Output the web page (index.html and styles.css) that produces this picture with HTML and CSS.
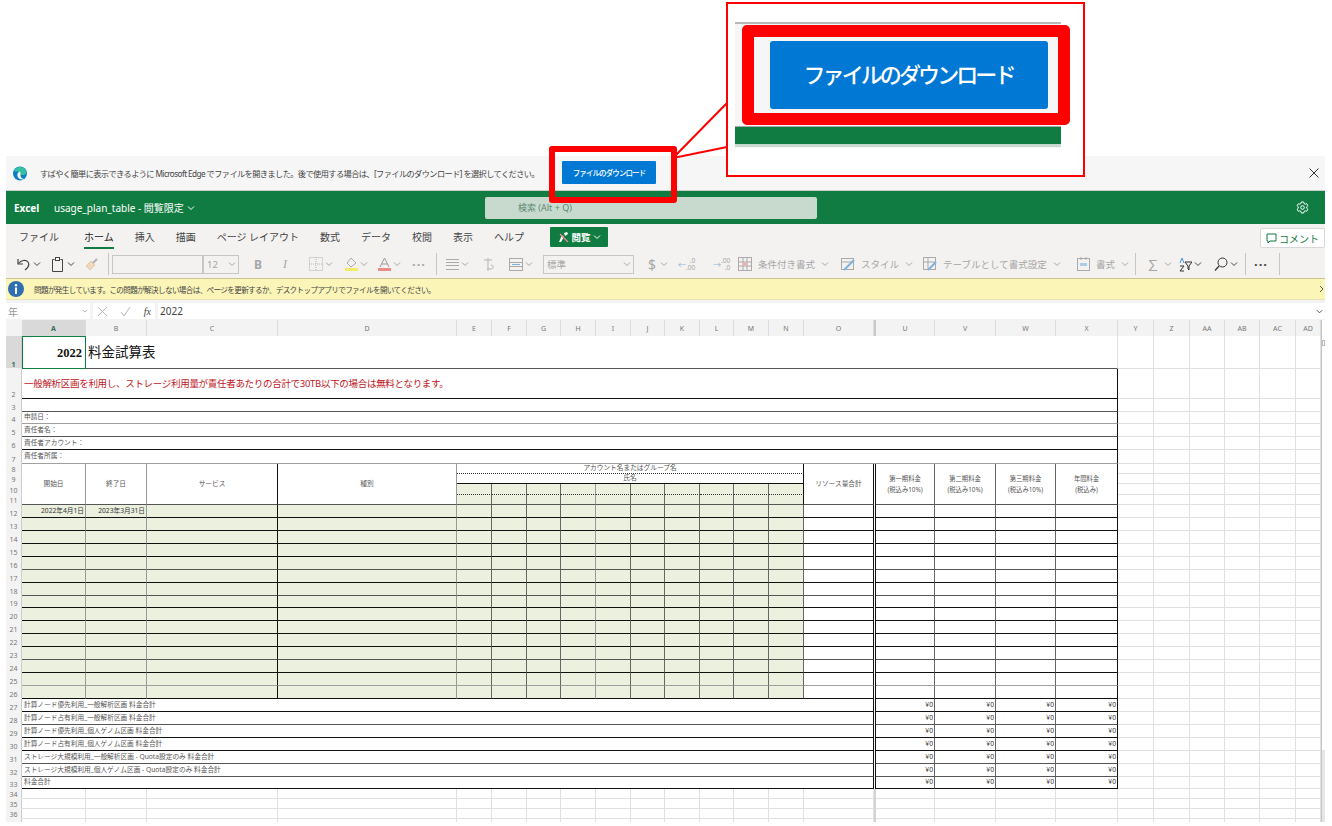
FILE: index.html
```html
<!DOCTYPE html>
<html lang="ja">
<head>
    <meta charset="UTF-8">
    <title>usage_plan_table</title>
    <link rel="stylesheet" href="styles.css">
</head>
<body>
    <svg class="defs" width="0" height="0">
        <symbol id="chev" viewBox="0 0 8 8"><path d="M1 2.500 4 5.500 7 2.500" fill="none" stroke="currentColor" stroke-width="1"/></symbol>
    </svg>

    <div class="page">
        <!-- Edge infobar -->
        <div class="edge-bar">
            <svg class="edge-logo" width="14" height="15" viewBox="0 0 14 15">
                <circle cx="7" cy="7.500" r="7" fill="#0c7fc4"/>
                <path d="M1 5C3 0 11-1 13.600 5.500 14 8 11 9.500 8 9 5 8.500 5 6.500 6.500 6 4 5 2 6 1 5Z" fill="#35c1a0"/>
                <path d="M7 5.500C5 6 3.800 8 4.600 10.500 5.500 13 9 14.500 12 13 9 13 7.500 11.500 7.500 9.500 7.500 8 7.500 6.500 7 5.500Z" fill="#f4f8fb"/>
            </svg>
            <span class="edge-msg">すばやく簡単に表示できるように Microsoft Edge でファイルを開きました。後で使用する場合は、[ファイルのダウンロード] を選択してください。</span>
            <button class="edge-btn">ファイルのダウンロード</button>
            <svg class="edge-close" width="10" height="10" viewBox="0 0 10 10"><path d="M.5.500 9.500 9.500M9.500.500.500 9.500" stroke="#333" stroke-width="1"/></svg>
        </div>

        <!-- Excel title bar -->
        <div class="top-bar">
            <div class="doc-title"><b>Excel</b><span>usage_plan_table - 閲覧限定</span><svg width="8" height="8"><use href="#chev"/></svg></div>
            <div class="search-box">検索 (Alt + Q)</div>
            <svg class="gear" width="13" height="13" viewBox="0 0 13 13" fill="none" stroke="#fff" stroke-width="1">
                <circle cx="6.500" cy="6.500" r="1.800"/>
                <path d="M5.300 1h2.400l.3 1.500 1.300.7 1.400-.5 1.200 2-1.100 1v1.600l1.100 1-1.200 2-1.400-.5-1.300.7L7.700 12H5.300L5 10.500l-1.300-.7-1.400.5-1.200-2 1.100-1V5.700l-1.100-1 1.200-2 1.400.5L5 2.500Z"/>
            </svg>
        </div>

        <!-- Ribbon tabs -->
        <div class="tabs">
            <span class="tab first">ファイル</span>
            <span class="tab active">ホーム</span>
            <span class="tab">挿入</span>
            <span class="tab">描画</span>
            <span class="tab">ページ レイアウト</span>
            <span class="tab">数式</span>
            <span class="tab">データ</span>
            <span class="tab">校閲</span>
            <span class="tab">表示</span>
            <span class="tab">ヘルプ</span>
            <button class="view-btn">
                <svg width="12" height="12" viewBox="0 0 12 12"><path d="M1 11 4 4l2 2-3 5Z" fill="#fff"/><path d="M6 2 9 1l1 2-3 2Z" fill="#fff"/><path d="M2 3 10 11" stroke="#f08a8a" stroke-width="1.200"/></svg>
                <b>閲覧</b>
                <svg width="8" height="8"><use href="#chev"/></svg>
            </button>
            <button class="comment-btn">
                <svg width="11" height="11" viewBox="0 0 11 11"><path d="M1 1h9v7H4L2 10V8H1Z" fill="none" stroke="#107c41"/></svg>
                コメント
            </button>
        </div>

        <!-- Ribbon toolbar -->
        <div class="toolbar">
            <div class="tool on">
                <svg width="14" height="14" viewBox="0 0 14 14" fill="none" stroke="#444" stroke-width="1.200"><path d="M1 2v5h5"/><path d="M1.500 6.500C4 3 9 2.500 11 5c1.500 2.500.5 5.500-3 8"/></svg>
                <svg class="chev" width="8" height="8"><use href="#chev"/></svg>
            </div>
            <div class="tool on">
                <svg width="13" height="15" viewBox="0 0 13 15" fill="none" stroke="#444"><path d="M2.500 2.500h-2v12h10v-12h-2"/><rect x="3.500" y=".5" width="4" height="3" fill="#fff"/></svg>
                <svg class="chev" width="8" height="8"><use href="#chev"/></svg>
            </div>
            <div class="tool">
                <svg width="13" height="13" viewBox="0 0 13 13"><path d="M1 8 6 3l4 4-5 5Z" fill="#f3d9b8" stroke="#c9b9a4" stroke-width=".6"/><path d="M8 5l4-4" stroke="#b0b0b0" stroke-width="2"/></svg>
            </div>
            <i class="sep"></i>
            <div class="combo"></div>
            <div class="combo size"><span>12</span><svg width="8" height="8"><use href="#chev"/></svg></div>
            <div class="tool letter"><b>B</b></div>
            <div class="tool letter"><em>I</em></div>
            <div class="tool">
                <svg width="14" height="14" viewBox="0 0 14 14" fill="none" stroke="#b5b5b5" stroke-dasharray="1 1"><rect x=".5" y=".5" width="13" height="13"/><path d="M7 0v14M0 7h14"/></svg>
                <svg class="chev" width="8" height="8"><use href="#chev"/></svg>
            </div>
            <div class="tool">
                <svg width="13" height="15" viewBox="0 0 13 15"><path d="M6 1 11 6 6 10 2 6Z" fill="none" stroke="#aaa"/><rect y="11" width="13" height="3" fill="#f2ec6a"/></svg>
                <svg class="chev" width="8" height="8"><use href="#chev"/></svg>
            </div>
            <div class="tool">
                <svg width="13" height="15" viewBox="0 0 13 15"><path d="M2 10 6.500 1 11 10M4 7h5" fill="none" stroke="#999"/><rect y="11" width="13" height="3" fill="#f08a8a"/></svg>
                <svg class="chev" width="8" height="8"><use href="#chev"/></svg>
            </div>
            <div class="tool dots">···</div>
            <i class="sep"></i>
            <div class="tool">
                <svg width="13" height="13" viewBox="0 0 13 13" stroke="#aaa"><path d="M0 1.500h13M0 4.500h13M0 7.500h13M0 11.500h13"/></svg>
                <svg class="chev" width="8" height="8"><use href="#chev"/></svg>
            </div>
            <div class="tool">
                <svg width="13" height="15" viewBox="0 0 13 15" fill="none" stroke="#b5b5b5"><path d="M6 1v13M2 3h8M9 8c3 0 3 4 0 4H5"/></svg>
            </div>
            <div class="tool">
                <svg width="14" height="13" viewBox="0 0 14 13" fill="none"><rect x=".5" y=".5" width="13" height="12" stroke="#aaa"/><path d="M0 4.500h14M0 8.500h14" stroke="#aaa"/><path d="M3 6.500h8" stroke="#7fb2dd"/></svg>
                <svg class="chev" width="8" height="8"><use href="#chev"/></svg>
            </div>
            <div class="combo std"><span>標準</span><svg width="8" height="8"><use href="#chev"/></svg></div>
            <div class="tool dollar"><span>$</span><svg class="chev" width="8" height="8"><use href="#chev"/></svg></div>
            <div class="tool num"><span class="arrow">←</span><span>.0<br>.00</span></div>
            <div class="tool num"><span class="arrow">→</span><span>.00<br>.0</span></div>
            <div class="tool text">
                <svg width="14" height="14" viewBox="0 0 14 14" fill="none" stroke="#aaa"><rect x=".5" y=".5" width="13" height="13"/><path d="M5 0v14M9 0v14M0 5h14M0 9h14"/><rect x="5" y="5" width="4" height="4" fill="#eeb4b4" stroke="none"/></svg>
                <span>条件付き書式</span><svg class="chev" width="8" height="8"><use href="#chev"/></svg>
            </div>
            <div class="tool text">
                <svg width="14" height="14" viewBox="0 0 14 14" fill="none" stroke="#aaa"><rect x=".5" y="1.500" width="12" height="11"/><path d="M0 5h13"/><path d="M3 13 13 3" stroke="#7fb2dd" stroke-width="2"/></svg>
                <span>スタイル</span><svg class="chev" width="8" height="8"><use href="#chev"/></svg>
            </div>
            <div class="tool text">
                <svg width="14" height="14" viewBox="0 0 14 14" fill="none" stroke="#aaa"><rect x=".5" y=".5" width="12" height="12"/><path d="M5 0v13M0 5h13"/><path d="M5 13 13 5" stroke="#7fb2dd" stroke-width="2"/></svg>
                <span>テーブルとして書式設定</span><svg class="chev" width="8" height="8"><use href="#chev"/></svg>
            </div>
            <div class="tool text">
                <svg width="13" height="14" viewBox="0 0 13 14" fill="none" stroke="#aaa"><rect x=".5" y="1.500" width="12" height="12"/><path d="M4 0v3M9 0v3"/><rect x="3" y="6" width="7" height="3" fill="#a9cdea" stroke="none"/></svg>
                <span>書式</span><svg class="chev" width="8" height="8"><use href="#chev"/></svg>
            </div>
            <i class="sep"></i>
            <div class="tool sigma"><span>∑</span><svg class="chev" width="8" height="8"><use href="#chev"/></svg></div>
            <div class="tool on">
                <svg width="13" height="15" viewBox="0 0 13 15" fill="none"><path d="M1 6 3 1l2 5" stroke="#4a90d9"/><path d="M1 9h4l-4 5h4" stroke="#333"/><path d="M6 5h7l-3 4v4l-1-1V9Z" stroke="#333"/></svg>
                <svg class="chev" width="8" height="8"><use href="#chev"/></svg>
            </div>
            <div class="tool on">
                <svg width="14" height="14" viewBox="0 0 14 14" fill="none" stroke="#333"><circle cx="8.500" cy="5.500" r="4.500"/><path d="M5 9 1 13.500" stroke-width="1.200"/></svg>
                <svg class="chev" width="8" height="8"><use href="#chev"/></svg>
            </div>
            <i class="sep"></i>
            <div class="tool dots dark">···</div>
            <i class="sep"></i>
        </div>

        <!-- Notice -->
        <div class="notice">
            <svg width="16" height="16" viewBox="0 0 16 16"><circle cx="8" cy="8" r="8" fill="#2f6fb0"/><circle cx="8" cy="4.300" r="1.200" fill="#fff"/><rect x="7" y="6.500" width="2" height="6.500" fill="#fff"/></svg>
            <span>問題が発生しています。この問題が解決しない場合は、ページを更新するか、デスクトップアプリでファイルを開いてください。</span>
            <svg class="notice-more" width="6" height="8" viewBox="0 0 6 8"><path d="M1 1 4 4 1 7" fill="none" stroke="#555"/></svg>
        </div>

        <!-- Formula bar -->
        <div class="formula-bar">
            <div class="name-box"><span>年</span><svg width="6" height="6" viewBox="0 0 8 8"><use href="#chev"/></svg></div>
            <div class="fx-box">
                <svg width="11" height="11" viewBox="0 0 11 11"><path d="M1 1 10 10M10 1 1 10" stroke="#bbb"/></svg>
                <svg width="11" height="11" viewBox="0 0 11 11"><path d="M1 6 4 10 10 1" fill="none" stroke="#bbb"/></svg>
                <em>fx</em>
            </div>
            <div class="formula-input"><span>2022</span><svg width="7" height="7"><use href="#chev"/></svg></div>
        </div>

        <!-- Sheet -->
        <div class="sheet">
            <table class="grid" id="grid"></table>
            <div class="vscroll"><i></i></div>
        </div>
    </div>

    <!-- Annotations on top of the screenshot -->
    <svg class="connector" width="60" height="60" viewBox="0 0 60 60">
        <path d="M1 57 55 2M1 57 55 46" fill="none" stroke="#f00" stroke-width="2"/>
    </svg>
    <div class="mark-small"></div>
    <div class="callout">
        <div class="callout-shot">
            <div class="callout-bar"></div>
            <div class="callout-green"></div>
        </div>
        <div class="mark-big"><button class="big-btn">ファイルのダウンロード</button></div>
    </div>

    <script src="app.js"></script>
</body>
</html>
```

FILE: styles.css
```css
* {
    margin: 0;
    padding: 0;
    box-sizing: border-box;
}

body {
    font-family: "Noto Sans", "Noto Sans CJK JP", sans-serif;
    background: #fff;
    color: #333;
    overflow: hidden;
    height: 826px;
}

button {
    font-family: inherit;
    border: none;
}

.defs {
    position: absolute;
}

/* Everything below the blank top of the screenshot */
.page {
    width: 1319px;
    margin-left: 6px;
    padding-top: 156px;
    display: flex;
    flex-direction: column;
}

/* Edge infobar */
.edge-bar {
    height: 34px;
    background: #f6f6f6;
    display: flex;
    align-items: center;
    padding: 0 6px 0 7px;
}

.edge-logo {
    margin-right: 13px;
    flex: none;
}

.edge-msg {
    width: 522px;
    flex: none;
    font-size: 8.200px;
    letter-spacing: -0.580px;
    color: #444;
    white-space: nowrap;
}

.edge-btn {
    width: 94px;
    height: 23px;
    margin-top: -1px;
    background: #0078d4;
    color: #fff;
    font-size: 7.500px;
    font-weight: 500;
    border-radius: 1px;
    letter-spacing: -0.900px;
}

.edge-close {
    margin-left: auto;
}

/* Green title bar */
.top-bar {
    height: 34px;
    background: #107c41;
    border-top: 1px solid #c9cfcb;
    display: grid;
    grid-template-columns: 479px 332px 1fr;
    align-items: center;
    color: #fff;
}

.doc-title {
    display: flex;
    align-items: center;
    font-size: 10px;
    padding-left: 8px;
    white-space: nowrap;
}

.doc-title b {
    width: 40px;
}

.doc-title svg {
    margin-left: 3px;
}

.search-box {
    height: 22px;
    background: #c8dace;
    border-radius: 2px;
    color: #5b8a70;
    font-size: 9px;
    padding-left: 33px;
    line-height: 22px;
}

.gear {
    justify-self: end;
    margin-right: 16px;
}

/* Ribbon tabs */
.tabs {
    height: 28px;
    background: #f3f2f1;
    display: flex;
    align-items: flex-start;
    gap: 21px;
    padding: 3px 0 0 13px;
    font-size: 10px;
    color: #444;
}

.tab {
    line-height: 20px;
    white-space: nowrap;
}

.tab.first {
    margin-right: 4px;
}

.tab.active {
    color: #222;
    border-bottom: 2px solid #107c41;
}

.view-btn {
    width: 58px;
    height: 20px;
    margin-left: 5px;
    background: #107c41;
    color: #fff;
    font-size: 9.500px;
    border-radius: 1px;
    display: flex;
    align-items: center;
    justify-content: center;
    gap: 2px;
}

.comment-btn {
    width: 65px;
    height: 20px;
    margin: 1px 0 0 auto;
    background: #fff;
    border: 1px solid #d8d8d8;
    border-radius: 2px;
    color: #107c41;
    font-size: 10px;
    display: flex;
    align-items: center;
    justify-content: center;
    gap: 2px;
    white-space: nowrap;
}

/* Ribbon toolbar: each track runs to the start of the next item */
.toolbar {
    height: 26px;
    background: #f3f2f1;
    display: grid;
    grid-template-columns: 35px 33px 23px 4px 91px 51px 29px 26px 36px 33px 34px 24px 10px 36px 27px 34px 105px 30px 35px 25px 103px 82px 154px 58px 11px 33px 35px 31px 9px 25px 1px;
    align-items: center;
    padding: 0 0 2px 11px;
    font-size: 9.500px;
    color: #a6a6a6;
}

.tool {
    display: flex;
    align-items: center;
    gap: 2px;
    white-space: nowrap;
}

.tool.on .chev {
    color: #444;
}

.tool.text {
    gap: 6px;
}

.letter {
    font-size: 12px;
    font-family: "Liberation Serif", serif;
}

.letter b {
    font-family: "Noto Sans", sans-serif;
}

.dots {
    font-size: 13px;
    font-weight: 700;
    letter-spacing: 1px;
}

.dots.dark {
    color: #444;
}

.dollar,
.sigma {
    font-size: 14px;
    gap: 4px;
}

.num {
    font-size: 6.500px;
    line-height: 7px;
    text-align: right;
    gap: 0;
}

.num .arrow {
    color: #8fb7dc;
    font-size: 8px;
}

.sep {
    width: 1px;
    height: 22px;
    background: #c8c6c4;
}

.combo {
    height: 19px;
    background: #f3f2f1;
    border: 1px solid #c8c6c4;
    display: flex;
    align-items: center;
    justify-content: space-between;
    padding: 0 2px 0 3px;
}

.combo.size {
    width: 36px;
}

.combo.std {
    width: 91px;
}

/* Yellow notice */
.notice {
    height: 22px;
    background: #fbf5b8;
    border-top: 1px solid #c9c68f;
    border-bottom: 1px solid #e6e3b4;
    display: flex;
    align-items: center;
    gap: 10px;
    padding-left: 2px;
    font-size: 7.600px;
    letter-spacing: -0.650px;
    color: #444;
}

.notice-more {
    margin-left: auto;
}

/* Formula bar */
.formula-bar {
    height: 20px;
    background: #f3f3f3;
    display: grid;
    grid-template-columns: 84px 62px 1fr;
    gap: 3px;
    padding: 3px 0 1px;
    font-size: 10px;
    color: #555;
}

.name-box,
.fx-box,
.formula-input {
    background: #fff;
    display: flex;
    align-items: center;
    justify-content: space-between;
    padding: 0 2px;
}

.name-box {
    color: #999;
}

.fx-box {
    padding: 0 4px;
}

.fx-box em {
    font-family: "Liberation Serif", serif;
    font-size: 10px;
    color: #444;
}

.formula-input {
    color: #444;
}

/* Spreadsheet */
.sheet {
    height: 502px;
    display: flex;
    overflow: hidden;
}

.grid {
    table-layout: fixed;
    border-collapse: separate;
    border-spacing: 0;
    width: 1315px;
    font-size: 6.700px;
    line-height: 1;
    color: #555;
    align-self: flex-start;
}

.grid td,
.grid th {
    border-right: 1px solid #e0e0e0;
    border-bottom: 1px solid #e0e0e0;
    padding: 0;
    font-weight: 400;
    white-space: nowrap;
    overflow: visible;
}

.grid th {
    background: #f3f3f3;
    color: #777;
    font-size: 7px;
    border-bottom: none;
    border-right-color: #dcdcdc;
    text-align: center;
}

.grid th.hl {
    background: #d9d9d9;
    color: #3a6b50;
    font-weight: 700;
}

.grid th.corner {
    border-right: none;
}

.grid th.row-no {
    vertical-align: bottom;
    border-right-color: #ccc;
    border-bottom: 1px solid #f3f3f3;
}

.grid th.marker {
    background: #c9c9c9;
    border-right: none;
}

.grid td.left {
    text-align: left;
    padding-left: 2px;
}

.grid td.center {
    text-align: center;
}

.grid td.right {
    text-align: right;
    padding-right: 1px;
    color: #333;
}

.grid td.fill {
    background: #ebf0df;
}

.grid td.hidden-col {
    background: #d4d4d4;
    border-right: none;
    border-bottom: none;
}

.grid td.selected {
    outline: 1px solid #107c41;
    outline-offset: -1px;
}

.grid td.title {
    font-family: "Liberation Serif", "Noto Sans CJK JP", serif;
    font-size: 13.500px;
    color: #111;
    vertical-align: middle;
    padding-top: 2px;
}

.grid td.year {
    text-align: right;
    padding-right: 3px;
    font-weight: 700;
    font-size: 12.500px;
}

.grid td.warn {
    font-size: 9.500px;
    letter-spacing: -0.300px;
    color: #c0141c;
}

.grid td.gap {
    border-bottom: none;
}

.grid td.two-line {
    line-height: 11px;
    font-size: 6.300px;
}

/* Line colours; the source is a downscaled capture so not all lines are equally dark */
.grid td.r0 { border-right-color: #111; }
.grid td.r1 { border-right-color: #666; }
.grid td.r2 { border-right-color: #999; }
.grid td.b0 { border-bottom-color: #111; }
.grid td.b1 { border-bottom-color: #555; }
.grid td.b2 { border-bottom-color: #a0a0a0; }
.grid td.dotted { border-bottom: 1px dotted #333; }

.vscroll {
    width: 4px;
    border-left: 1px solid #c4c4c4;
    padding-top: 20px;
    display: flex;
    flex-direction: column;
    background: linear-gradient(#fff 430px, #e6e6e6 430px);
}

.vscroll i {
    height: 6px;
    background: #fff;
    border: 1px solid #bbb;
}

/* Annotations */
.mark-small {
    position: absolute;
    left: 549px;
    top: 146px;
    width: 128px;
    height: 57px;
    border: 6px solid #f00;
    border-radius: 3px;
}

.connector {
    position: absolute;
    left: 672px;
    top: 101px;
}

.callout {
    position: absolute;
    left: 726px;
    top: 2px;
    width: 359px;
    height: 175px;
    border: 2px solid #f00;
    background: #fff;
}

.callout-shot {
    position: absolute;
    left: 7px;
    top: 18px;
    width: 326px;
    height: 126px;
    display: flex;
    flex-direction: column;
    background: #f6f6f6;
    border-top: 2px solid #b9b9b9;
}

.callout-bar {
    height: 103px;
    border-bottom: 1px solid #aaa;
}

.callout-green {
    height: 20px;
    background: #107c41;
    border-bottom: 3px solid #c8dace;
}

.mark-big {
    position: absolute;
    left: 14px;
    top: 21px;
    width: 328px;
    height: 100px;
    border: 12px solid #f00;
    border-radius: 5px;
    display: flex;
    align-items: center;
    justify-content: center;
}

.big-btn {
    width: 278px;
    height: 68px;
    margin-left: 5px;
    padding-bottom: 4px;
    background: #0078d4;
    color: #fff;
    font-size: 22px;
    font-weight: 500;
    letter-spacing: -2.900px;
    border-radius: 3px;
}
```

FILE: app.js
```js
// Column layout of the visible sheet (P-T are hidden, shown as a thin "gap" column)
const COLS = [
    ['', 16], ['A', 64], ['B', 61], ['C', 131], ['D', 179],
    ['E', 35], ['F', 35], ['G', 34], ['H', 35], ['I', 35], ['J', 34], ['K', 35], ['L', 34], ['M', 35], ['N', 35],
    ['O', 70], ['', 2], ['U', 59], ['V', 61], ['W', 60], ['X', 62],
    ['Y', 36], ['Z', 36], ['AA', 35], ['AB', 35], ['AC', 36], ['AD', 25]
];

const A = 1, E = 5, N = 14, O = 15, GAP = 16, U = 17, X = 20, Y = 21;

// Row heights, index 0 is row 1
const HEIGHTS = [33, 30, 13, 12, 13, 13, 14, 10, 10, 11, 10,
    13, 13, 13, 13, 13, 13, 13, 12, 13, 13, 13, 13, 13, 13, 13,
    13, 13, 13, 13, 13, 13, 12, 10, 10, 10, 10];

// Only a sliver of row 37 is inside the picture
const LAST_NUMBERED = 36;

// Bottom line strength per row, right line strength per column
const ROW_LINE = { 1: 'b1', 2: 'b0', 3: 'b1', 4: 'b2', 5: 'b1', 6: 'b0', 7: 'b2', 11: 'b1', 12: 'b0', 13: 'b0', 16: 'b1', 18: 'b1', 20: 'b0', 23: 'b1', 25: 'b2', 26: 'b0', 28: 'b1', 31: 'b1', 32: 'b1' };
const COL_LINE = { 1: 'r2', 2: 'r2', 3: 'r0', 4: 'r2', 8: 'r2', 15: 'r0', 16: 'r0', 17: 'r1', 18: 'r1', 19: 'r1', 20: 'r0' };

const FOOT_LABELS = [
    '計算ノード優先利用_一般解析区画 料金合計',
    '計算ノード占有利用_一般解析区画 料金合計',
    '計算ノード優先利用_個人ゲノム区画 料金合計',
    '計算ノード占有利用_個人ゲノム区画 料金合計',
    'ストレージ大規模利用_一般解析区画 - Quota設定のみ 料金合計',
    'ストレージ大規模利用_個人ゲノム区画 - Quota設定のみ 料金合計',
    '料金合計'
];

const HEAD_TEXT = {
    1: '開始日', 2: '終了日', 3: 'サービス', 4: '種別', 15: 'リソース量合計',
    17: '第一期料金<br>(税込み10%)', 18: '第二期料金<br>(税込み10%)', 19: '第三期料金<br>(税込み10%)', 20: '年間料金<br>(税込み)'
};

const grid = document.getElementById('grid');

function addCell(tr, cls, html, span, rowspan) {
    const td = document.createElement('td');
    td.className = cls || '';
    if (html) td.innerHTML = html;
    if (span) td.colSpan = span;
    if (rowspan) td.rowSpan = rowspan;
    tr.appendChild(td);
}

function rightLine(col) {
    return COL_LINE[col] || 'r1';
}

// Plain grid cells from col to the end
function addBlank(tr, from) {
    for (let c = from; c < COLS.length; c++) {
        addCell(tr);
    }
}

function addColGroup() {
    const group = document.createElement('colgroup');
    COLS.forEach(function (col) {
        const el = document.createElement('col');
        el.style.width = col[1] + 'px';
        group.appendChild(el);
    });
    grid.appendChild(group);
}

function addHeader() {
    const tr = grid.insertRow();
    tr.style.height = '16px';
    COLS.forEach(function (col, i) {
        const th = document.createElement('th');
        th.textContent = col[0];
        if (i === 0) th.className = 'corner';
        if (i === A) th.className = 'hl';
        if (i === GAP) th.className = 'marker';
        tr.appendChild(th);
    });
}

function addRow(n) {
    const tr = grid.insertRow();
    const line = ROW_LINE[n] || 'b0';
    tr.style.height = HEIGHTS[n - 1] + 'px';

    const head = document.createElement('th');
    head.textContent = n <= LAST_NUMBERED ? n : '';
    head.className = n === 1 ? 'row-no hl' : 'row-no';
    tr.appendChild(head);

    if (n === 1) {
        addCell(tr, 'title year selected b1', '2022');
        addCell(tr, 'title left b1', '料金試算表', X - A);
        addBlank(tr, Y);
    } else if (n === 2) {
        addCell(tr, 'left warn r0 ' + line, '一般解析区画を利用し、ストレージ利用量が責任者あたりの合計で30TB以下の場合は無料となります。', X);
        addBlank(tr, Y);
    } else if (n <= 7) {
        const labels = { 4: '申請日：', 5: '責任者名：', 6: '責任者アカウント：', 7: '責任者所属：' };
        addCell(tr, 'left r0 ' + line, labels[n] || '', X);
        addBlank(tr, Y);
    } else if (n === 8) {
        for (let c = A; c < E; c++) addCell(tr, 'center b1 ' + rightLine(c), HEAD_TEXT[c], 0, 4);
        addCell(tr, 'center dotted r0', 'アカウント名またはグループ名', N - E + 1);
        addCell(tr, 'center b1 r0', HEAD_TEXT[O], 0, 4);
        addCell(tr, 'gap r0', '', 0, 4);
        for (let c = U; c <= X; c++) addCell(tr, 'center two-line b1 ' + rightLine(c), HEAD_TEXT[c], 0, 4);
        addBlank(tr, Y);
    } else if (n === 9) {
        addCell(tr, 'center b0 r0', '氏名', N - E + 1);
        addBlank(tr, Y);
    } else if (n === 10 || n === 11) {
        for (let c = E; c <= N; c++) {
            const last = c === N ? 'r0' : rightLine(c);
            addCell(tr, 'fill ' + last + (n === 10 ? ' dotted' : ' b1'));
        }
        addBlank(tr, Y);
    } else if (n <= 26) {
        const start = { 1: '2022年4月1日', 2: '2023年3月31日' };
        for (let c = A; c <= X; c++) {
            if (c === GAP) {
                addCell(tr, 'gap r0');
            } else {
                const fill = c <= N ? ' fill' : '';
                const text = n === 12 ? start[c] : '';
                addCell(tr, 'right ' + line + ' ' + rightLine(c) + fill, text);
            }
        }
        addBlank(tr, Y);
    } else if (n <= 33) {
        addCell(tr, 'left r0 ' + line, FOOT_LABELS[n - 27], O);
        addCell(tr, 'gap r0');
        for (let c = U; c <= X; c++) addCell(tr, 'right ' + line + ' ' + rightLine(c), '¥0');
        addBlank(tr, Y);
    } else {
        for (let c = A; c < COLS.length; c++) {
            addCell(tr, c === GAP ? 'hidden-col' : '');
        }
    }
}

addColGroup();
addHeader();
for (let n = 1; n <= HEIGHTS.length; n++) {
    addRow(n);
}
```
